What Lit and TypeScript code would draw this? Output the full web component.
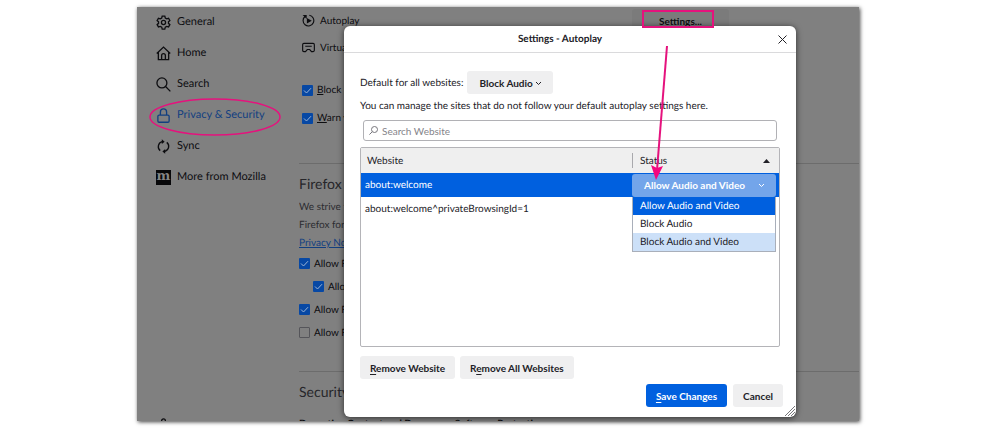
import { LitElement, html, css, svg } from "lit";
import { customElement, property } from "lit/decorators.js";

const font = css`Lato, "Open Sans", sans-serif`;

const icons = {
  general: svg`<path d="M6.6 1.2h2.8l.5 2 1.5.9 2-.6 1.4 2.4-1.5 1.4v1.6l1.5 1.4-1.4 2.4-2-.6-1.5.9-.5 2H6.6l-.5-2-1.5-.9-2 .6-1.4-2.4 1.5-1.4V7.300l-1.500-1.400 1.400-2.400 2 .6 1.500-.9z"/><circle cx="8" cy="8" r="2.200"/>`,
  home: svg`<path d="M.8 8 8 1.200 15.200 8M2.500 6.800v7.700h11V6.800M6 14.500v-4.300a2 2 0 0 1 4 0v4.300"/>`,
  search: svg`<circle cx="6.300" cy="6.300" r="5.300"/><path d="m10.200 10.200 5.100 5.100"/>`,
  lock: svg`<rect x="2" y="7.500" width="12" height="7.700" rx="1.300"/><path d="M4.700 7.500V4.200a3.300 3.300 0 0 1 6.600 0v3.300"/>`,
  sync: svg`<path d="M6.500 2.700A5.600 5.600 0 0 0 4.500 12.400M9.500 13.300A5.600 5.600 0 0 0 11.500 3.600"/><path d="m6.200.3 3 2.500-3 2.600zM9.800 10.600l-3 2.600 3 2.500z" fill="currentColor" stroke="none"/>`,
  puzzle: svg`<path d="M2 4.500h4V3a2 2 0 0 1 4 0v1.500h4V15H2z"/>`,
  autoplay: svg`<path d="M4 2.800A6.600 6.600 0 1 0 9 1.600"/><path d="M.8 1.200h5v5z" fill="currentColor" stroke="none"/><path d="m6 4.800 6 3.500-6 3.500z" fill="currentColor" stroke="none"/>`,
  vr: svg`<path d="M2.300 3h11.400q1.500 0 1.500 1.500v7q0 1.500-1.500 1.500h-2L9.500 10.500h-3L4.300 13h-2Q.8 13 .8 11.500v-7Q.8 3 2.300 3zM4 6.500h8"/>`,
};

@customElement("side-item")
class SideItem extends LitElement {
  @property() icon = "";
  @property() label = "";
  static styles = css`
    :host { display: block; }
    a { display: flex; align-items: center; gap: 6px; height: 20px; color: inherit; text-decoration: none; white-space: nowrap; }
    svg { width: 15px; height: 15px; fill: none; stroke: currentColor; stroke-width: 1.4; }
    .moz { display: flex; justify-content: center; width: 15px; height: 15px; background: #08080a; color: #858585; font: bold 13px/13px "DejaVu Serif", serif; }
  `;
  render() {
    return html`<a href="#">
      ${this.icon === "mozilla"
        ? html`<span class="moz">m</span>`
        : html`<svg viewBox="0 0 16 16" aria-hidden="true">${icons[this.icon as keyof typeof icons]}</svg>`}
      <span>${this.label}</span></a>`;
  }
}

@customElement("autoplay-dialog")
class AutoplayDialog extends LitElement {
  static styles = css`
    * { box-sizing: border-box; }
    :host { display: flex; flex-direction: column; background: #fff; border-radius: 6px; color: #222127; box-shadow: 0 1px 6px rgba(0, 0, 0, 0.65); font: 10px/16px ${font}; }
    header { display: flex; align-items: center; gap: 8px; height: 27px; padding: 0 8px; border-bottom: 1px solid #dadadc; }
    h1 { flex: 1; margin: 0; font-size: 10px; font-weight: 700; text-align: center; }
    button, select, input { font: inherit; color: inherit; margin: 0; }
    button, select { border: 0; border-radius: 3px; background: #efeff0; font-weight: 700; }
    .close { display: grid; place-items: center; width: 12px; height: 12px; padding: 0; background: none; }
    svg { fill: none; stroke: currentColor; }
    .close svg { width: 9px; height: 9px; }
    .body { flex: 1; display: flex; flex-direction: column; padding: 18px 16px 10px; }
    .default { display: flex; align-items: center; gap: 4px; height: 23px; }
    .picker { display: inline-block; position: relative; }
    .picker svg { position: absolute; right: 11px; top: 50%; width: 7px; height: 5px; margin-top: -2px; pointer-events: none; }
    select { appearance: none; display: block; height: 23px; padding: 0 20px 0 12px; }
    p { margin: 4px 0 6px; white-space: nowrap; }
    .search { display: flex; align-items: center; gap: 4px; height: 21px; margin: 0 3px 6px; padding: 0 5px; border: 1px solid #b1b1b5; border-radius: 3px; }
    .search svg { width: 9px; height: 9px; color: #77767c; }
    .search input { flex: 1; min-width: 0; padding: 0; border: 0; outline: 0; background: none; }
    input::placeholder { color: #85848a; opacity: 1; }
    .list { flex: 1; border: 1px solid #b4b4b8; border-radius: 2px; }
    table { width: 100%; border-collapse: collapse; table-layout: fixed; }
    th, td { height: 24px; padding: 0 4px; text-align: left; font-weight: 400; }
    th { height: 25px; padding: 0 6px; background: #efefef; }
    .status { width: 147px; padding: 0; }
    .sort { display: flex; align-items: center; justify-content: space-between; height: 15px; padding: 0 9px 0 7px; border-left: 1px solid #a9a9ad; }
    .sort svg { width: 7px; height: 4px; fill: currentColor; stroke: none; }
    .selected { background: #0060df; color: #fff; }
    .choice { display: block; position: relative; margin-right: 3px; }
    .choice .picker { display: block; }
    .choice select { width: 100%; padding: 0 12px; background: #73a5ea; }
    .menu { position: absolute; z-index: 1; top: 100%; left: 0; right: 0; margin: 0; padding: 0; list-style: none; background: #fff; color: #222127; border: 1px solid #a9afba; border-top: 0; }
    .menu li { height: 18px; padding: 0 7px; line-height: 18px; }
    .menu .active { background: #0060df; color: #fff; }
    .menu .hover { background: #cce0f8; }
    .actions { display: flex; gap: 5px; margin-top: 9px; }
    .actions button { height: 23px; padding: 0 10px; white-space: nowrap; }
    .confirm { justify-content: flex-end; gap: 6px; margin: 5px -3px 0 0; }
    .actions .primary { background: #0060df; color: #fff; }
    u { text-underline-offset: 2px; }
    .grip { position: absolute; right: 1px; bottom: 1px; width: 10px; height: 10px; color: #77777a; }
  `;
  private chevron = html`<svg viewBox="0 0 7 5" aria-hidden="true"><path d="m1 1 2.500 2.500L6 1" /></svg>`;
  render() {
    return html`
      <header>
        <h1>Settings - Autoplay</h1>
        <button class="close" aria-label="Close"><svg viewBox="0 0 9 9"><path d="m.5.5 8 8m0-8-8 8" /></svg></button>
      </header>
      <div class="body">
        <div class="default">
          <label for="default">Default for all websites:</label>
          <span class="picker">
            <select id="default"><option>Block Audio</option></select>${this.chevron}
          </span>
        </div>
        <p>You can manage the sites that do not follow your default autoplay settings here.</p>
        <div class="search">
          <svg viewBox="0 0 9 9" aria-hidden="true"><circle cx="5.500" cy="3.500" r="3" /><path d="M3.300 5.700.4 8.600" /></svg>
          <input type="search" aria-label="Search Website" placeholder="Search Website" />
        </div>
        <div class="list">
          <table>
            <thead>
              <tr>
                <th>Website</th>
                <th class="status">
                  <div class="sort">Status <svg viewBox="0 0 7 4" aria-hidden="true"><path d="M0 4 3.500 0 7 4z" /></svg></div>
                </th>
              </tr>
            </thead>
            <tbody>
              <tr class="selected">
                <td>about:welcome</td>
                <td class="status">
                  <div class="choice">
                    <span class="picker">
                      <select aria-label="Status"><option>Allow Audio and Video</option></select>${this.chevron}
                    </span>
                    <ul class="menu" role="listbox" aria-label="Status">
                      <li class="active" role="option" aria-selected="true">Allow Audio and Video</li>
                      <li role="option">Block Audio</li>
                      <li class="hover" role="option">Block Audio and Video</li>
                    </ul>
                  </div>
                </td>
              </tr>
              <tr>
                <td>about:welcome^privateBrowsingId=1</td>
                <td class="status"></td>
              </tr>
            </tbody>
          </table>
        </div>
        <div class="actions">
          <button><u>R</u>emove Website</button>
          <button>R<u>e</u>move All Websites</button>
        </div>
        <div class="actions confirm">
          <button class="primary"><u>S</u>ave Changes</button>
          <button>Cancel</button>
        </div>
      </div>
      <svg class="grip" viewBox="0 0 10 10" aria-hidden="true"><path d="M0 10 10 0M3 10l7-7M6 10l4-4" /></svg>
    `;
  }
}

@customElement("app-root")
class AppRoot extends LitElement {
  static styles = css`
    * { box-sizing: border-box; }
    :host { display: block; box-sizing: border-box; height: 100vh; padding: 7px 141px 9px 137px; background: #fff; color: #0d0d10; font: 10px/16px ${font}; text-rendering: geometricPrecision; }
    .shot { position: relative; height: 100%; background: #808080; box-shadow: 1px 1px 4px rgba(0, 0, 0, 0.75); }
    .page { display: flex; height: 100%; overflow: hidden; }
    nav { display: flex; flex-direction: column; flex: none; gap: 11px; width: 162px; padding: 5px 0 0 19px; font-size: 11px; }
    .current { color: #123f80; }
    nav > svg { flex: none; width: 15px; height: 15px; margin: auto 0 -12px; fill: none; stroke: currentColor; stroke-width: 1.4; }
    main { flex: 1; min-width: 0; white-space: nowrap; overflow: hidden; }
    .row { display: flex; align-items: center; gap: 5px; height: 27px; }
    .row svg { width: 13px; height: 13px; fill: none; stroke: currentColor; stroke-width: 1.4; }
    .inset { padding-left: 3px; }
    .settings { width: 97px; height: 23px; margin-left: auto; margin-right: 130px; padding: 0; border: 0; border-radius: 3px; background: #7b7b7b; color: inherit; font: 700 10px/16px ${font}; }
    .permissions { padding: 15px 0 31px; }
    label { display: flex; align-items: center; gap: 4px; height: 23px; }
    label.nested { padding-left: 14px; }
    .permissions label { height: 28px; padding-left: 3px; }
    input { appearance: none; width: 11px; height: 11px; margin: 0; border: 1px solid #55555a; border-radius: 1px; }
    input:checked { border: 0; background: #0748a4 url("data:image/svg+xml,%3Csvg xmlns='http://www.w3.org/2000/svg' viewBox='0 0 11 11'%3E%3Cpath d='m2 5.500 2.500 2.500L9 3.200' fill='none' stroke='%239bb4d6'/%3E%3C/svg%3E"); }
    section { border-top: 1px solid #6c6c6c; padding-top: 10px; }
    h2 { margin: 0 0 4px; font: 400 14px/20px ${font}; color: #26262a; }
    h3 { margin: 14px 0 0; font: 700 10px/16px ${font}; }
    p { margin: 0; line-height: 18px; color: #2c2c30; }
    p a { color: #123f80; }
    .data { padding-bottom: 27px; }
    autoplay-dialog { position: absolute; inset: 19px 63px 4px 207px; }
    .notes { position: absolute; inset: 0; width: 100%; height: 100%; overflow: visible; pointer-events: none; fill: none; stroke: #e5127d; }
    .notes .head { fill: #f4067f; stroke: none; }
  `;
  render() {
    return html`
      <div class="shot">
        <div class="page">
          <nav>
            <side-item icon="general" label="General"></side-item>
            <side-item icon="home" label="Home"></side-item>
            <side-item icon="search" label="Search"></side-item>
            <side-item class="current" icon="lock" label="Privacy & Security"></side-item>
            <side-item icon="sync" label="Sync"></side-item>
            <side-item icon="mozilla" label="More from Mozilla"></side-item>
            <svg viewBox="0 0 16 16" aria-hidden="true">${icons.puzzle}</svg>
          </nav>
          <main>
            <div class="row inset">
              <svg viewBox="0 0 16 16" aria-hidden="true">${icons.autoplay}</svg>Autoplay
              <button class="settings">Se<u>t</u>tings...</button>
            </div>
            <div class="row inset"><svg viewBox="0 0 16 16" aria-hidden="true">${icons.vr}</svg>Virtual Reality</div>
            <div class="permissions">
              <label><input type="checkbox" checked /><span><u>B</u>lock pop-up windows</span></label>
              <label><input type="checkbox" checked /><span><u>W</u>arn you when websites try to install add-ons</span></label>
            </div>
            <section class="data">
              <h2>Firefox Data Collection and Use</h2>
              <p>We strive to provide you with choices</p>
              <p>Firefox for everyone.</p>
              <p><a href="#">Privacy Notice</a></p>
              <label><input type="checkbox" checked />Allow Firefox to send technical data</label>
              <label class="nested"><input type="checkbox" checked />Allow personalized recommendations</label>
              <label><input type="checkbox" checked />Allow Firefox to install and run studies</label>
              <label><input type="checkbox" />Allow Firefox to send crash reports</label>
            </section>
            <section>
              <h2>Security</h2>
              <h3>Deceptive Content and Dangerous Software Protection</h3>
            </section>
          </main>
        </div>
        <autoplay-dialog role="dialog" aria-label="Settings - Autoplay"></autoplay-dialog>
        <svg class="notes" aria-hidden="true">
          <ellipse cx="78" cy="110" rx="65" ry="18" stroke-width="1.500" />
          <rect x="506" y="4" width="70" height="16" stroke-width="2" />
          <path d="M530 39 520 163" stroke-width="2" />
          <path class="head" d="m519 173-5-15 6 3 6-2z" />
        </svg>
      </div>
    `;
  }
}
